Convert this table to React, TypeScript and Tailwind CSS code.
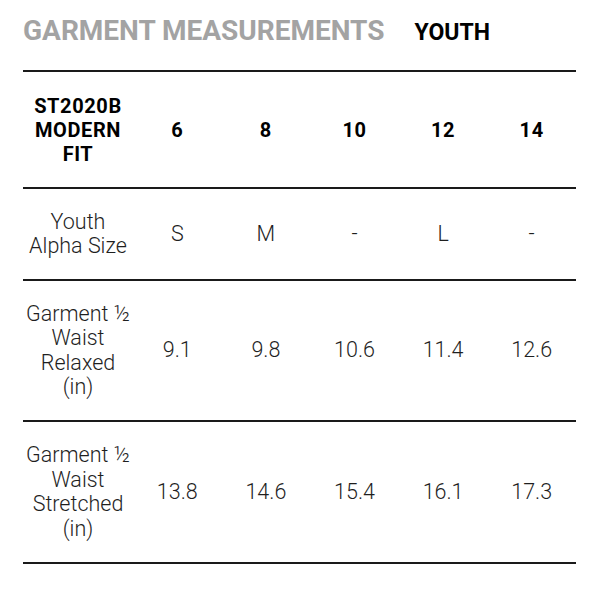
const sizes = ['6', '8', '10', '12', '14'];

const rows = [
  { label: ['Youth', 'Alpha Size'], values: ['S', 'M', '-', 'L', '-'], h: 'h-[92px]' },
  { label: ['Garment ½', 'Waist', 'Relaxed', '(in)'], values: ['9.1', '9.8', '10.6', '11.4', '12.6'], h: 'h-[141px]' },
  { label: ['Garment ½', 'Waist', 'Stretched', '(in)'], values: ['13.8', '14.6', '15.4', '16.1', '17.3'], h: 'h-[142px]' },
];

export default function App() {
  return (
    <div className="w-[599px] h-[600px] bg-white pl-[23px] pt-[14px] font-['Roboto',sans-serif]">
      {/* title */}
      <div className="flex items-baseline h-[34px]">
        <span className="text-[28px] leading-[34px] font-bold text-[#a3a3a3]">GARMENT MEASUREMENTS</span>
        <span className="ml-[30px] text-[23px] font-bold text-black">YOUTH</span>
      </div>

      <div className="w-[553px] mt-[22px] border-t-2 border-[#1a1a1a]">
        {/* header row */}
        <div className="grid grid-cols-[110px_repeat(5,1fr)] items-center h-[117px] border-b-2 border-[#1a1a1a] text-[20px] leading-[24px] font-bold text-black tracking-[0.6px]">
          <div className="text-center">
            ST2020B
            <br />
            MODERN
            <br />
            FIT
          </div>
          {sizes.map((s) => (
            <div key={s} className="text-center">{s}</div>
          ))}
        </div>

        {rows.map((r, i) => (
          <div
            key={i}
            className={`grid grid-cols-[110px_repeat(5,1fr)] items-center ${r.h} border-b-2 border-[#1a1a1a] text-[21.5px] leading-[24.5px] font-light text-[#1f1f1f]`}
          >
            <div className="text-center">
              {r.label.map((l, j) => (
                <div key={j}>{l}</div>
              ))}
            </div>
            {r.values.map((v, j) => (
              <div key={j} className="text-center">{v}</div>
            ))}
          </div>
        ))}
      </div>
    </div>
  );
}
